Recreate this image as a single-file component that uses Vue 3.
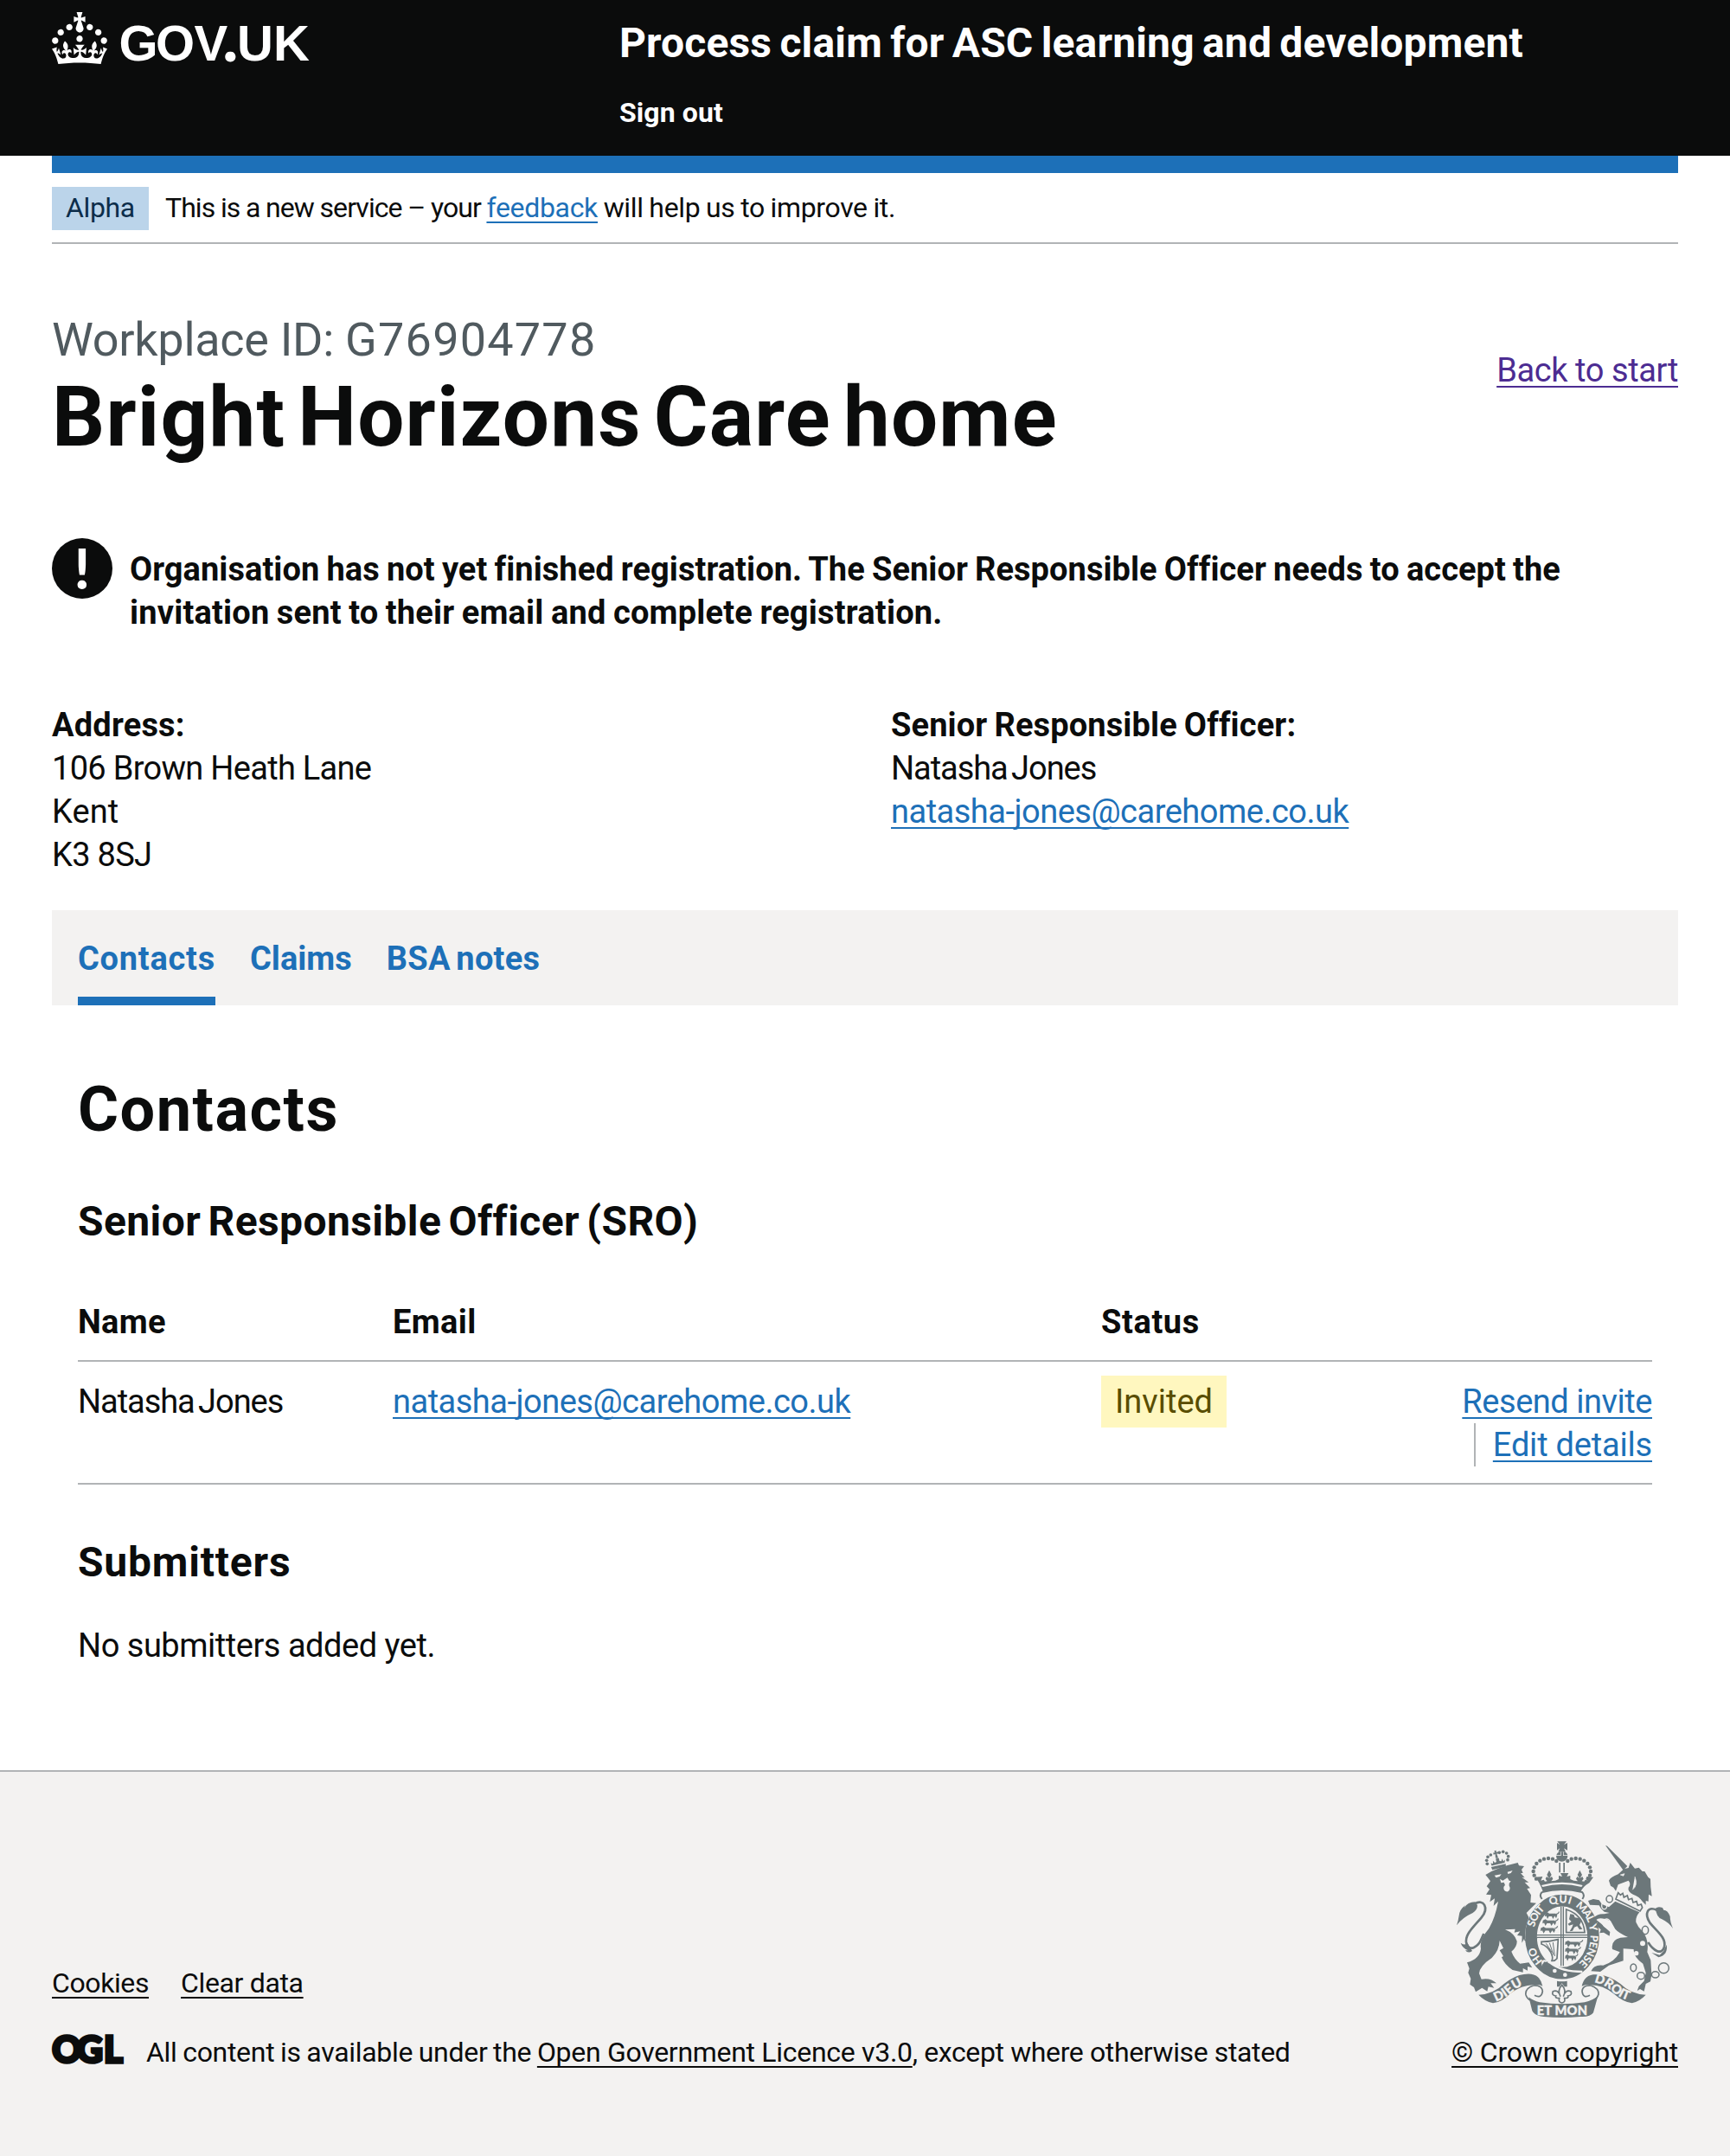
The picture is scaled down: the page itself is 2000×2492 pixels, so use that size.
<script setup>
const tabs = [
  { label: 'Contacts', cls: 'tab-contacts', current: true },
  { label: 'Claims', cls: 'tab-claims', current: false },
  { label: 'BSA notes', cls: 'tab-notes', current: false },
]

// Pearls on the arches of the royal crown, left half; the right half is mirrored.
const pearls = [[418, 122], [405, 115], [390, 113], [375, 115], [361, 121], [349, 131], [341, 144], [338, 158], [341, 172], [348, 184]]
const smallPearls = [[178, 132], [176, 120], [180, 108], [190, 101], [220, 93], [233, 90], [245, 95], [251, 106], [249, 118]]
</script>

<template>
  <div class="page">
    <header class="header">
      <div class="container header-row">
        <a class="logo" aria-label="GOV.UK">
          <svg class="logo-svg" viewBox="0 0 300 80" width="300" height="80" fill="#fff">
            <path transform="scale(2)" d="M22.6 10.4c-1 .4-2-.1-2.4-1-.4-.9.1-2 1-2.4.9-.4 2 .1 2.4 1s-.1 2-1 2.4m-5.9 6.7c-.9.4-2-.1-2.4-1-.4-.9.1-2 1-2.4.9-.4 2 .1 2.4 1s-.1 2-1 2.4m10.8-3.7c-1 .4-2-.1-2.4-1-.4-.9.1-2 1-2.4.9-.4 2 .1 2.4 1s0 2-1 2.4m3.3 4.8c-1 .4-2-.1-2.4-1-.4-.9.1-2 1-2.4.9-.4 2 .1 2.4 1s-.1 2-1 2.4M17 4.7l2.3 1.2V2.5l-2.3.7-.2-.2.9-3h-3.4l.9 3-.2.2c-.1.1-2.3-.7-2.3-.7v3.4L15 4.7c.1.1.1.2.2.2l-1.3 4c-.1.2-.1.4-.1.6 0 1.1.8 2 1.9 2.2h.7c1-.2 1.9-1.1 1.9-2.1 0-.2 0-.4-.1-.6l-1.3-4c-.1-.2 0-.2.1-.3m-7.6 5.7c.9.4 2-.1 2.4-1 .4-.9-.1-2-1-2.4-.9-.4-2 .1-2.4 1s0 2 1 2.4m-5 3c.9.4 2-.1 2.4-1 .4-.9-.1-2-1-2.4-.9-.4-2 .1-2.4 1s.1 2 1 2.4m-3.2 4.8c.9.4 2-.1 2.4-1 .4-.9-.1-2-1-2.4-.9-.4-2 .1-2.4 1s0 2 1 2.4m14.8 11c4.4 0 8.6.3 12.3.8 1.1-4.5 2.4-7 3.7-8.8l-2.5-.9c.2 1.3.3 1.9 0 2.7-.4-.4-.8-1.1-1.1-2.3l-1.2 4c.7-.5 1.3-.8 2-.9-1.1 2.5-2.6 3.1-3.5 3-1.1-.2-1.7-1.2-1.5-2.1.3-1.2 1.5-1.5 2.1-.1 1.1-2.3-.8-3-2-2.3 1.9-1.9 2.1-3.5.6-5.6-2.1 1.6-2.1 3.2-1.2 5.5-1.2-1.4-3.2-.6-2.5 1.6.9-1.4 2.1-.5 1.9.8-.2 1.1-1.7 2.1-3.5 1.9-2.7-.2-2.9-2.1-2.9-3.6.7-.1 1.9.5 2.9 1.9l.4-4.3c-1.1 1.1-2.1 1.4-3.2 1.4.4-1.2 2.1-3 2.1-3h-5.4s1.7 1.9 2.1 3c-1.1 0-2.1-.2-3.2-1.4l.4 4.3c1-1.4 2.2-2 2.9-1.9-.1 1.5-.2 3.4-2.9 3.6-1.9.2-3.4-.8-3.5-1.9-.2-1.3 1-2.2 1.9-.8.7-2.3-1.2-3-2.5-1.6.9-2.2.9-3.9-1.2-5.5-1.5 2-1.3 3.7.6 5.6-1.2-.7-3.1 0-2 2.3.6-1.4 1.8-1.1 2.1.1.2.9-.3 1.9-1.5 2.1-.9.2-2.4-.5-3.5-3 .6 0 1.2.3 2 .9l-1.2-4c-.3 1.1-.7 1.9-1.1 2.3-.3-.8-.2-1.4 0-2.7l-2.9.9C1.3 23 2.6 25.5 3.7 30c3.7-.5 7.9-.8 12.3-.8" />
            <text class="wordmark" y="56"><tspan x="77.5">G</tspan><tspan x="120">O</tspan><tspan x="164.5">V</tspan><tspan class="wordmark-dot" x="197.5" y="56.5">.</tspan><tspan x="214" y="56">U</tspan><tspan x="256">K</tspan></text>
          </svg>
        </a>
        <div class="header-content">
          <div class="service-name">Process claim for ASC learning and development</div>
          <nav class="sign-out">Sign out</nav>
        </div>
      </div>
    </header>

    <div class="container">
      <div class="blue-bar"></div>
      <div class="phase">
        <strong class="phase-tag">Alpha</strong>
        <span class="phase-text"><span class="phase-a">This is a new service – your </span><a class="link feedback">feedback</a><span class="phase-b"> will help us to improve it.</span></span>
      </div>

      <main class="main">
        <div class="title-row">
          <div>
            <div class="caption">Workplace ID: <span class="caption-id">G76904778</span></div>
            <h1 class="title">Bright Horizons Care home</h1>
          </div>
          <a class="link back">Back to start</a>
        </div>

        <div class="warning">
          <span class="warning-icon">!</span>
          <strong class="warning-text">Organisation has not yet finished registration. The Senior Responsible Officer needs to accept the<br><span class="warning-second">invitation sent to their email and complete registration.</span></strong>
        </div>

        <div class="details">
          <div class="details-col">
            <b class="lab-address">Address:</b>
            <span class="addr-1">106 Brown Heath Lane</span>
            <span class="addr-2">Kent</span>
            <span class="addr-3">K3 8SJ</span>
          </div>
          <div class="details-col">
            <b class="lab-sro">Senior Responsible Officer:</b>
            <span class="person">Natasha Jones</span>
            <a class="link email">natasha-jones@carehome.co.uk</a>
          </div>
        </div>

        <nav class="tabs">
          <a v-for="t in tabs" :key="t.label" class="tab" :class="[t.cls, { current: t.current }]">{{ t.label }}</a>
        </nav>

        <section class="panel">
          <h2 class="h-contacts">Contacts</h2>
          <h3 class="h-sro">Senior Responsible Officer (SRO)</h3>
          <div class="row head">
            <b class="th-name">Name</b><b class="th-email">Email</b><b class="th-status">Status</b><span></span>
          </div>
          <div class="row">
            <span class="person">Natasha Jones</span>
            <span><a class="link email">natasha-jones@carehome.co.uk</a></span>
            <span><strong class="tag">Invited</strong></span>
            <span class="actions">
              <a class="link resend">Resend invite</a>
              <span class="edit-wrap"><a class="link edit">Edit details</a></span>
            </span>
          </div>
          <h3 class="h-sub">Submitters</h3>
          <p class="none">No submitters added yet.</p>
        </section>
      </main>
    </div>

    <footer class="footer">
      <div class="container footer-row">
        <div class="footer-left">
          <div class="footer-links">
            <a class="flink cookies">Cookies</a><a class="flink clear">Clear data</a>
          </div>
          <div class="licence">
            <svg class="ogl" viewBox="0 0 82 40" width="82" height="40">
              <text class="ogl-text" y="32"><tspan x="0.3">O</tspan><tspan x="28.5">G</tspan><tspan x="60">L</tspan></text>
            </svg>
            <span><span class="lic-a">All content is available under the </span><a class="flink lic-link">Open Government Licence v3.0</a><span class="lic-b">, except where otherwise stated</span></span>
          </div>
        </div>
        <div class="footer-right">
          <svg class="crest" viewBox="69 50 756 618" width="252" height="206">
            <defs>
              <path id="garter" d="M437 499 A99 116 0 0 1 437 267 A99 116 0 0 1 437 499" />
              <path id="dieu" d="M208 609 Q238 600 268 573 Q292 553 322 549" />
              <path id="droit" d="M549 544 Q580 546 612 575 Q640 600 680 608" />
              <g id="lion-passant">
                <path d="M0 4 l8-4 6 4 22 0 6 5 -4 9 -5-7 -6 9 -4-8 -10 0 -5 8 -4-9 -5 2z" />
                <path d="M38 6 q10-2 10-8" fill="none" stroke="currentColor" stroke-width="3" />
              </g>
            </defs>

            <!-- lion -->
            <path d="M172 170 Q212 144 284 128 L288 138 L306 140 L297 152 L302 164 L294 164 L308 180 L298 178 L322 196 L308 196 L327 216 L316 218 L330 240 L328 266 L348 268 L328 288 L314 302 Q330 330 338 352 L350 384 L344 408 L334 402 L330 418 L320 400 L312 408 L306 392 L298 406 L299 382 L282 380 L292 366 L272 370 L275 358 L240 360 Q272 372 281 400 Q282 420 262 436 Q272 462 292 478 L322 474 L334 492 L318 488 L318 502 L302 494 L302 508 L266 500 Q238 482 228 456 L234 452 L221 432 L234 424 L221 398 Q220 432 194 458 Q152 486 150 512 L158 532 Q190 526 210 546 L190 546 L202 562 L182 558 L178 574 L160 562 L138 576 L132 560 L118 550 L121 530 L112 510 L116 495 L108 474 Q152 462 156 426 Q150 396 184 356 Q206 318 216 262 L200 278 L204 252 L187 264 L192 240 L174 238 L186 220 L176 210 L189 192 L180 180Z" />
            <g fill="#f3f2f1">
              <path d="M203 172 l24-4 -6 8 -12 4z M248 160 l18-5 -6 9 -10 3z M222 184 l10 6 16-10 6 10 6 2 -6 8 0 8 a11 12 0 1 1 -14-2 l-4-10 -10 2z" />
              <path d="M186 158 Q230 134 280 124 L278 118 L180 150z" />
            </g>
            <g transform="rotate(-13 213 125)">
              <path d="M191 134 h46 l4-10 -7 4 -2-10 -5 8 -6-2 0-10 -6-3 -5 3 0 10 -6 2 -5-8 -2 10 -7-4z M188 138 h52 l-2 10 h-48z" />
              <path d="M211 85 h7 l-1 7 6-1 v7 l-6-1 2 14 h-9 l2-14 -6 1 v-7 l6 1z" />
            </g>
            <circle v-for="(p, i) in smallPearls" :key="'s' + i" :cx="p[0]" :cy="p[1]" r="5.5" />
            <path d="M135 270 C165 252 186 284 158 318 C130 352 98 378 106 408 C116 440 148 418 158 392 L166 374" fill="none" stroke="currentColor" stroke-width="8" />
            <path d="M72 345 Q78 328 80 312 Q82 290 102 276 L98 285 Q110 264 136 264 L144 276 Q144 292 128 302 Q92 318 72 345Z M86 406 Q104 418 108 404 L126 434 Q112 444 102 432 L112 432 Q92 424 86 406Z" />

            <!-- royal crown -->
            <path d="M421 54 h32 l-9 12 12-7 v26 l-12-7 6 12 h-26 l6-12 -10 7 v-26 l10 7z" />
            <path d="M434 90 h7 v14 h16 a20 20 0 0 1 -40 0 h17z M418 102 a20 18 0 0 1 14-13 v13z M443 89 a20 18 0 0 1 14 13 h-14z" />
            <circle v-for="(p, i) in pearls" :key="'l' + i" :cx="p[0]" :cy="p[1]" r="6.6" />
            <circle v-for="(p, i) in pearls" :key="'r' + i" :cx="875 - p[0]" :cy="p[1]" r="6.6" />
            <path d="M427 128 h5 v34 h-5z M442 128 h5 v34 h-5z" />
            <path d="M346 178 l24-2 -6 14 10 -3 4 6 8-1 -6-8 4-8 8 6 -7-12 8-16 8 16 -7 12 8-6 4 8 -6 8 14-2 12-5 0-12 12 3 -6-12 h28 l-6 12 12-3 0 12 12 5 14 2 -6-8 4-8 8 6 -7-12 8-16 8 16 -7 12 8-6 4 8 -6 8 8 1 4-6 10 3 -6-14 24 2 -14 20 Q508 212 502 230 Q437 214 372 230 Q366 212 358 198z" />
            <path d="M366 206 Q437 186 509 206 L505 212 Q437 194 370 212Z" fill="#f3f2f1" />
            <path d="M368 230 Q437 212 507 230 Q518 240 508 254 M368 230 Q357 240 368 254" fill="none" stroke="currentColor" stroke-width="6" />

            <!-- garter and shield -->
            <ellipse cx="438" cy="385" rx="129" ry="149" fill="#f3f2f1" />
            <ellipse cx="438" cy="385" rx="108" ry="126" fill="none" stroke="currentColor" stroke-width="41" />
            <path d="M432 280 h4 v206 h-4z M440 280 h4 v206 h-4z M350 377 h176 v4 h-176z M350 385 h176 v4 h-176z" />
            <text class="motto"><textPath href="#garter" startOffset="74" textLength="58">HO</textPath></text>
            <text class="motto"><textPath href="#garter" startOffset="200" textLength="74">SOIT</textPath></text>
            <text class="motto"><textPath href="#garter" startOffset="296" textLength="72">QUI</textPath></text>
            <text class="motto"><textPath href="#garter" startOffset="386" textLength="74">MAL</textPath></text>
            <text class="motto"><textPath href="#garter" startOffset="466">Y</textPath></text>
            <text class="motto"><textPath href="#garter" startOffset="502" textLength="110">PENSE</textPath></text>
            <use href="#lion-passant" transform="translate(379 300) scale(1 1.15)" />
            <use href="#lion-passant" transform="translate(371 324) scale(1.1 1.15)" />
            <use href="#lion-passant" transform="translate(364 350) scale(1.2 1.15)" />
            <use href="#lion-passant" transform="translate(449 398) scale(1.25 1.15)" />
            <use href="#lion-passant" transform="translate(449 422) scale(1.1 1.15)" />
            <use href="#lion-passant" transform="translate(449 446) scale(.9 1.15)" />
            <path d="M452 290 Q512 310 516 370 H452Z" fill="none" stroke="currentColor" stroke-width="5" />
            <path d="M466 306 l12 2 4 10 14 2 8 12 -6 12 10 14 -10 2 -8-12 -10 4 -6 12 -10 2 8-14 4-10 -14 4 -4-6 12-8 -8-8 z" />
            <path d="M366 402 Q396 402 424 394 L420 460 Q412 470 402 468 Q408 456 398 438 Q386 416 366 410Z" fill="none" stroke="currentColor" stroke-width="5" />
            <path d="M382 408 L404 440 M394 406 L408 448 M406 404 L412 452" stroke="currentColor" stroke-width="3" />
            <path d="M372 486 Q364 462 386 470 L398 476 Q436 506 508 506" fill="none" stroke="#f3f2f1" stroke-width="7" />
            <path d="M388 474 Q366 476 372 498 Q380 516 398 508 M378 494 L400 490" fill="none" stroke="currentColor" stroke-width="7" />
            <circle cx="412" cy="503" r="7" fill="#f3f2f1" /><circle cx="448" cy="517" r="7" fill="#f3f2f1" />
            <path d="M330 384 L352 388 L346 410 L330 418 L318 404 L306 396z" />

            <!-- pendant -->
            <path d="M420 538 Q437 542 455 538 V558 H446 L437 546 L428 558 H420Z" />
            <path d="M437 552 Q454 570 442 592 Q450 566 468 574 Q474 588 458 590 Q462 598 446 598 Q450 612 437 614 Q424 612 428 598 Q412 598 416 590 Q400 588 406 574 Q424 566 432 592 Q420 570 437 552Z" fill="#f3f2f1" stroke="currentColor" stroke-width="5" />

            <!-- ribbon -->
            <path d="M148 586 Q200 584 236 548 Q284 510 330 514 Q362 518 370 556 Q354 548 338 552 Q298 552 258 582 Q226 614 198 615 Q168 608 148 586Z" />
            <path d="M728 586 Q676 584 640 548 Q592 512 546 516 Q514 520 506 556 Q520 548 538 552 Q578 552 616 582 Q650 612 680 615 Q708 608 728 586Z" />
            <path d="M338 554 Q368 552 370 574 Q366 600 342 588 M338 554 Q308 564 312 586 Q316 600 330 606" fill="none" stroke="currentColor" stroke-width="5" />
            <path d="M538 554 Q508 552 507 574 Q510 600 534 588 M538 554 Q566 564 564 584 Q560 598 546 606" fill="none" stroke="currentColor" stroke-width="5" />
            <path d="M322 594 Q336 606 360 612 Q437 624 516 612 Q544 606 562 590 L546 648 Q536 664 500 662 Q437 668 374 662 Q344 660 334 642Z" />
            <text class="scroll"><textPath href="#dieu" textLength="110">DIEU</textPath></text>
            <text class="scroll"><textPath href="#droit" textLength="134">DROIT</textPath></text>
            <text class="scroll" x="350" y="656" textLength="175">ET MON</text>

            <!-- unicorn -->
            <path d="M588 68 L594 70 L664 140 L650 154Z" />
            <path d="M600 190 Q606 178 632 168 L652 150 L668 146 L674 128 L690 148 L704 145 L716 158 L724 158 L736 178 L744 184 L745 212 L749 244 L738 238 L737 262 L728 260 L728 274 L716 262 Q706 246 684 238 Q664 228 668 214 Q678 202 668 190 L652 196 L632 204 L624 226 L616 214 L606 208Z" />
            <path d="M640 170 l14-4 -4 8z M690 176 q12 30-8 46" fill="#f3f2f1" stroke="#f3f2f1" stroke-width="2" />
            <path d="M632 232 l8 8 8-6 4 14 12-6 4 14 12-4 4 14 12-4 4 14 12-4 4 12 -8 12 -84-42z" fill="none" stroke="currentColor" stroke-width="5" />
            <path d="M622 262 L706 300 Q692 316 694 334 Q700 350 716 366 Q740 394 733 438 L745 466 L748 516 L744 540 L728 548 L722 574 L708 566 L698 572 L704 556 L722 538 L728 510 L718 478 Q684 454 686 428 L650 426 L650 468 L600 484 L570 506 L538 504 Q548 480 580 484 Q618 474 638 438 L612 428 Q606 396 640 388 L666 386 Q632 370 622 358 L606 330 Q568 314 556 326 Q580 344 586 352 L604 368 L602 382 L582 370 L568 372 L572 360 L556 346 L560 336 L546 320 Q560 304 584 306 L602 302 L584 298 Q572 290 566 276 L534 274 L528 260 L546 254 L566 258 L576 272 L600 282Z" />
            <path d="M766 292 C734 278 722 304 742 336 C766 366 800 388 792 420 C782 452 752 430 736 404" fill="none" stroke="currentColor" stroke-width="8" />
            <path d="M762 286 Q770 278 786 284 L790 292 Q804 292 812 314 Q812 332 822 356 Q806 334 784 324 Q764 316 762 286Z M748 440 L776 448 L790 434 L800 412 Q806 448 772 456Z" />
            <g fill="#f3f2f1">
              <circle cx="717" cy="408" r="9" /><circle cx="695" cy="442" r="8" />
            </g>
            <g fill="none" stroke="currentColor" stroke-width="4.5">
              <ellipse cx="602" cy="254" rx="11" ry="12" /><ellipse cx="726" cy="362" rx="11" ry="14" />
              <ellipse cx="685" cy="492" rx="10" ry="13" /><ellipse cx="711" cy="520" rx="13" ry="12" />
              <ellipse cx="761" cy="516" rx="13" ry="11" /><circle cx="790" cy="493" r="18" />
            </g>
            <g fill="none" stroke="#f3f2f1" stroke-width="4">
              <ellipse cx="584" cy="277" rx="9" ry="12" /><ellipse cx="592" cy="337" rx="13" ry="14" />
            </g>
          </svg>
          <a class="flink copyright">© Crown copyright</a>
        </div>
      </div>
    </footer>
  </div>
</template>

<style>
body { margin: 0; background: #fff; }
</style>

<style scoped>
.page { font-family: Roboto, "Liberation Sans", sans-serif; font-size: 38px; line-height: 50px; color: #0b0c0c; min-height: 2492px; display: flex; flex-direction: column; white-space: nowrap; font-variant-ligatures: no-common-ligatures; }
.container { margin: 0 60px; }
h1, h2, h3, p { margin: 0; }
.link { color: #1d70b8; text-decoration: underline; text-decoration-thickness: 2px; text-underline-offset: 5px; text-decoration-skip-ink: none; }

.header { background: #0b0c0c; color: #fff; height: 180px; }
.header-row { display: grid; grid-template-columns: 656px 1fr; }
.logo { display: block; padding-top: 14px; }
.logo-svg { display: block; overflow: visible; }
.wordmark { font: 700 58px "Liberation Sans", Arial, sans-serif; }
.wordmark-dot { font: 900 74px Lato, sans-serif; }
.service-name { padding-top: 20px; font-size: 48px; line-height: 60px; font-weight: 700; letter-spacing: 0.15px; word-spacing: -2.8px; }
.sign-out { margin-top: 30px; font-size: 32px; line-height: 40px; font-weight: 700; letter-spacing: 0.1px; }

.blue-bar { height: 20px; background: #1d70b8; }
.phase { display: flex; align-items: flex-start; height: 64px; padding-top: 16px; border-bottom: 2px solid #b1b4b6; font-size: 32px; line-height: 40px; }
.phase-tag { box-sizing: border-box; width: 112px; padding: 4px 16px 6px; font-weight: 400; background: #bbd4ea; color: #0c2d4a; letter-spacing: -0.35px; }
.phase-text { margin: 4px 0 0 19px; white-space: pre; }
.phase-a { letter-spacing: -0.93px; word-spacing: -0.4px; }
.phase-b { letter-spacing: -0.35px; word-spacing: -0.9px; }
.feedback { letter-spacing: -0.32px; }

.title-row { display: flex; justify-content: space-between; align-items: flex-start; padding-top: 81px; }
.caption { font-size: 54px; line-height: 60px; color: #505a5f; letter-spacing: -0.3px; }
.caption-id { letter-spacing: 1.2px; }
.title { margin-top: 9px; font-size: 96px; line-height: 100px; font-weight: 700; letter-spacing: 1.2px; word-spacing: -11px; }
.back { margin-top: 40px; color: #4c2c92; letter-spacing: -0.4px; }

.warning { display: flex; margin-top: 90px; }
.warning-icon { width: 70px; height: 70px; border-radius: 50%; background: #0b0c0c; color: #fff; font: 900 64px/70px Lato, sans-serif; text-align: center; }
.warning-text { margin: 11px 0 0 20px; font-weight: 700; letter-spacing: 0.05px; word-spacing: -1.3px; }
.warning-second { letter-spacing: 0.2px; }

.details { display: grid; grid-template-columns: 970px 1fr; margin-top: 80px; }
.details-col { display: flex; flex-direction: column; align-items: flex-start; }
.lab-address { letter-spacing: 0.2px; }
.addr-1 { letter-spacing: -0.7px; }
.addr-2 { letter-spacing: 0.1px; }
.addr-3 { letter-spacing: -0.7px; }
.lab-sro { letter-spacing: 0.12px; word-spacing: -1.5px; }
.person { letter-spacing: -1.05px; word-spacing: -4px; }
.email { letter-spacing: -0.5px; }

.tabs { display: flex; gap: 40px; margin-top: 39px; padding: 0 30px; height: 110px; background: #f3f2f1; }
.tab { padding: 31px 0 19px; font-weight: 700; color: #1d70b8; }
.tab.current { border-bottom: 10px solid #1d70b8; }
.tab-contacts { letter-spacing: 0.75px; }
.tab-notes { letter-spacing: 0.25px; word-spacing: -3px; }

.panel { padding: 81px 30px 0; }
.h-contacts { font-size: 72px; line-height: 80px; letter-spacing: 1.5px; }
.h-sro { margin-top: 59px; font-size: 48px; line-height: 60px; letter-spacing: 0.4px; word-spacing: -4px; }
.row { display: grid; grid-template-columns: 364px 819px 1fr auto; padding: 21px 0 19px; border-bottom: 2px solid #b1b4b6; }
.head { margin-top: 40px; }
.th-name { letter-spacing: 0.3px; }
.th-email { letter-spacing: 0.4px; }
.th-status { letter-spacing: 0.6px; }
.tag { display: block; width: 113px; margin-top: -5px; padding: 5px 16px; font-weight: 400; background: #fff7bf; color: #594d00; }
.actions { display: flex; flex-direction: column; align-items: flex-end; }
.resend { letter-spacing: -0.46px; }
.edit-wrap { border-left: 2px solid #b1b4b6; padding-left: 20px; }
.edit { letter-spacing: -0.2px; }
.h-sub { margin-top: 60px; font-size: 48px; line-height: 60px; letter-spacing: 0.8px; }
.none { margin-top: 41px; letter-spacing: -0.48px; }

.footer { flex: 1; margin-top: 119px; border-top: 2px solid #b1b4b6; background: #f3f2f1; font-size: 32px; line-height: 40px; }
.footer-row { display: flex; justify-content: space-between; padding-top: 79px; }
.footer-left { padding-top: 145px; }
.footer-links { display: flex; gap: 37px; margin-bottom: 40px; }
.flink { text-decoration: underline; text-decoration-thickness: 2px; text-underline-offset: 5px; text-decoration-skip-ink: none; }
.cookies { letter-spacing: -0.4px; }
.clear { letter-spacing: -0.35px; }
.licence { display: flex; gap: 27px; white-space: pre; }
.ogl { display: block; overflow: visible; }
.ogl-text { font: 900 42px Lato, sans-serif; fill: #0b0c0c; stroke: #0b0c0c; stroke-width: 3.5px; }
.lic-a { letter-spacing: -0.3px; word-spacing: -1px; }
.lic-link { letter-spacing: -0.3px; }
.lic-b { letter-spacing: -0.38px; }
.footer-right { display: flex; flex-direction: column; align-items: flex-end; }
.crest { display: block; margin-right: 5px; margin-bottom: 19px; color: #6c777a; fill: currentColor; }
.motto { font: 900 37px Lato, sans-serif; fill: #f3f2f1; }
.scroll { font: 900 44px Lato, sans-serif; fill: #f3f2f1; stroke: #f3f2f1; stroke-width: 1px; }
.copyright { letter-spacing: -0.18px; }
</style>
